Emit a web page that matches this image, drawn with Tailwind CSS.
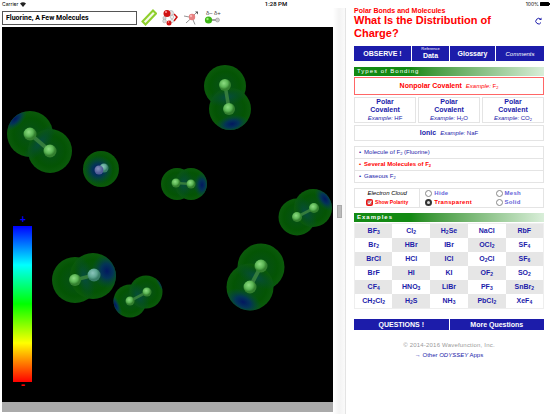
<!DOCTYPE html>
<html lang="en">
<head>
  <meta charset="UTF-8" />
  <meta name="viewport" content="width=device-width, initial-scale=1.0" />
  <title>Polar Bonds and Molecules</title>
  <script src="https://cdn.jsdelivr.net/npm/@tailwindcss/browser@4"></script>
</head>
<body class="h-screen flex flex-col overflow-hidden bg-white font-['Liberation_Sans',Arial,sans-serif] text-[#1c1caa]">
  <!-- Status bar -->
  <header class="grid grid-cols-3 items-center h-2 shrink-0 px-[2px] font-[Inter,sans-serif] text-[5px] leading-none text-black">
    <div class="flex items-center gap-[2px]">
      Carrier
      <svg class="w-[6px] h-[5px]" viewBox="0 0 12 10"><path d="M6 10 0 3a9 9 0 0 1 12 0z" fill="#222" /></svg>
    </div>
    <div class="text-center font-[Roboto,sans-serif] text-[6px] font-medium">1:28 PM</div>
    <div class="flex items-center justify-end gap-px">
      100%
      <svg class="w-[10px] h-[4px]" viewBox="0 0 20 8"><rect width="18" height="8" rx="1" /><rect x="18" y="2" width="2" height="4" /></svg>
    </div>
  </header>

  <div class="flex flex-1 min-h-0">
    <!-- Viewer -->
    <main class="flex flex-col flex-1 min-w-0 pl-[2px] pb-[2px]">
      <div class="flex items-center h-[19px] shrink-0">
        <input type="text" aria-label="Model title" value="Fluorine, A Few Molecules" class="w-[135px] h-[14px] border border-[#555] px-[3px] font-[Roboto,sans-serif] text-[7px] font-bold text-black" />
        <div class="flex items-center gap-[5px] ml-[4px]">
          <button aria-label="Measure">
            <svg class="w-4 h-[17px]" viewBox="0 0 16 17"><path d="M1.500 12.500 12 1.500 15 4.500 4.500 15.500z" fill="#f4fbe4" stroke="#8fcf2c" stroke-width="2" /></svg>
          </button>
          <button aria-label="Molecules">
            <svg class="w-4 h-[17px]" viewBox="0 0 16 17">
              <path d="M12 5l3 3-3 4" fill="none" stroke="#c11" stroke-width="1.500" />
              <g stroke="#888" stroke-width=".4"><circle cx="9" cy="4" r="2.500" fill="#e4e4e4" /><circle cx="10" cy="8" r="1.800" fill="#eee" /><circle cx="2.500" cy="9" r="1.600" fill="#ddd" /><circle cx="2.500" cy="12" r="1.800" fill="#ddd" /><circle cx="10" cy="12" r="1.600" fill="#eee" /></g>
              <circle cx="5" cy="4.500" r="3.500" fill="#d01414" /><circle cx="4" cy="3" r="1" fill="#f99" />
              <circle cx="7" cy="14" r="2.500" fill="#d01414" /><circle cx="6.500" cy="13" r=".7" fill="#f99" />
            </svg>
          </button>
          <button aria-label="Bonds">
            <svg class="w-4 h-[17px]" viewBox="0 0 16 17"><path d="M9 8 14 3M1 7l8 1.500M3 14l6-5.500 3 7" fill="none" stroke="#888" stroke-width=".9" /><path d="M12 2.500h3v3z" fill="#555" /><circle cx="9" cy="8" r="3.200" fill="#e78080" /><circle cx="8" cy="7" r="1.200" fill="#f7b5b5" /></svg>
          </button>
          <button aria-label="Partial charges">
            <svg class="w-[18px] h-[17px]" viewBox="0 0 18 17">
              <text x="2" y="6" font-size="6" fill="#444">δ−</text><text x="10" y="6" font-size="6" fill="#444">δ+</text>
              <path d="M5 11h8" stroke="#666" stroke-width="1.200" /><circle cx="4.500" cy="11" r="3.600" fill="#3db515" /><circle cx="3.500" cy="10" r="1.200" fill="#9e7" /><circle cx="13.500" cy="11" r="2" fill="#ccc" stroke="#888" stroke-width=".5" />
            </svg>
          </button>
        </div>
      </div>

      <svg class="flex-1 min-h-0 w-full bg-black" viewBox="2 27 331 375" preserveAspectRatio="xMidYMid slice">
        <defs>
          <radialGradient id="cloud"><stop offset="0" stop-color="#06501a" /><stop offset=".7" stop-color="#045404" /><stop offset="1" stop-color="#0b5a0b" /></radialGradient>
          <radialGradient id="charge"><stop offset="0" stop-color="#021760" /><stop offset=".4" stop-color="#033060" stop-opacity=".9" /><stop offset="1" stop-color="#055040" stop-opacity="0" /></radialGradient>
          <radialGradient id="seam"><stop offset="0" stop-color="#064c40" /><stop offset="1" stop-color="#064c30" stop-opacity="0" /></radialGradient>
          <radialGradient id="atom" cx=".4" cy=".35"><stop offset="0" stop-color="#8ddd82" /><stop offset=".65" stop-color="#5cb555" /><stop offset="1" stop-color="#33802f" /></radialGradient>
          <radialGradient id="atomPositive" cx=".4" cy=".35"><stop offset="0" stop-color="#8ac4bc" /><stop offset=".65" stop-color="#5ea692" /><stop offset="1" stop-color="#387e68" /></radialGradient>
          <radialGradient id="atomEnd" cx=".4" cy=".35"><stop offset="0" stop-color="#8793bd" /><stop offset="1" stop-color="#505c97" /></radialGradient>
          <linearGradient id="scale" x2="0" y2="1">
            <stop offset="0" stop-color="#00f" /><stop offset=".25" stop-color="#0ff" /><stop offset=".5" stop-color="#0f0" /><stop offset=".75" stop-color="#ff0" /><stop offset="1" stop-color="#f00" />
          </linearGradient>
        </defs>
        <g id="molecules"></g>
        <rect x="13" y="226" width="19" height="156" fill="url(#scale)" />
        <text x="23" y="223" text-anchor="middle" font-size="10" font-weight="bold" fill="#00f">+</text>
        <text x="23" y="389" text-anchor="middle" font-size="13" font-weight="bold" fill="#f00">-</text>
      </svg>
      <div class="h-[10px] shrink-0 bg-[#aaa]"></div>
    </main>

    <!-- Divider -->
    <div class="flex items-center justify-center w-[13px] shrink-0 border-r border-[#e4e4e4] bg-linear-to-r from-white via-[#f3f3f3] to-[#fafafa]">
      <div class="w-[5px] h-[13px] border border-[#aaa] bg-[#bbb]"></div>
    </div>

    <!-- Lesson -->
    <aside class="w-[206px] shrink-0 px-2">
      <h2 class="text-[7px] leading-[6px] font-bold text-[#f00]">Polar Bonds and Molecules</h2>
      <div class="flex justify-between mb-[6px]">
        <h1 class="w-[150px] text-[11px] leading-[13px] font-bold text-[#f00]">What Is the Distribution of Charge?</h1>
        <button aria-label="Reload" class="self-start pt-[3px] pr-[2px]">
          <svg class="w-[7px] h-[8px]" viewBox="0 0 14 16" fill="none" stroke="#1c1caa" stroke-width="2"><path d="M11.500 5A5.500 5.500 0 1 0 12 11" /><path d="M13 1v5H8z" fill="#1c1caa" stroke="none" /></svg>
        </button>
      </div>

      <nav class="grid grid-cols-[57fr_37fr_45fr_48fr] gap-px h-[15px] text-center text-[7px] leading-[8px] font-bold text-white">
        <a href="#" class="flex items-center justify-center bg-[#1c1caa]">OBSERVE !</a>
        <a href="#" class="bg-[#1c1caa]"><span class="block text-[4px] leading-[6px] font-normal">Reference</span>Data</a>
        <a href="#" class="flex items-center justify-center bg-[#1c1caa]">Glossary</a>
        <a href="#" class="flex items-center justify-center bg-[#1c1caa] text-[6px] font-normal italic">Comments</a>
      </nav>

      <h3 class="mt-[6px] h-[9px] pl-[3px] bg-linear-to-r from-[#138a13] from-30% to-[#d9eed9] text-[6px] leading-[9px] tracking-[1px] text-white">Types of Bonding</h3>
      <div class="mt-px grid grid-cols-3 gap-[2px] text-center text-[7px] leading-[8px]">
        <a href="#" class="col-span-3 border border-[#f66] leading-[16px] text-[#f00]"><b>Nonpolar Covalent</b> <i class="ml-[2px] text-[6px]">Example: </i><span class="text-[6px]">F<sub class="text-[4px]">2</sub></span></a>
        <a href="#" class="border border-[#e4e4e4]"><b class="block">Polar<br>Covalent</b><span class="block text-[6px]"><i>Example:</i> HF</span></a>
        <a href="#" class="border border-[#e4e4e4]"><b class="block">Polar<br>Covalent</b><span class="block text-[6px]"><i>Example:</i> H<sub class="text-[4px]">2</sub>O</span></a>
        <a href="#" class="border border-[#e4e4e4]"><b class="block">Polar<br>Covalent</b><span class="block text-[6px]"><i>Example:</i> CO<sub class="text-[4px]">2</sub></span></a>
        <a href="#" class="col-span-3 border border-[#e4e4e4] leading-[14px]"><b>Ionic</b> <span class="ml-[2px] text-[6px]"><i>Example:</i> NaF</span></a>
      </div>

      <ul class="mt-[5px] border border-[#e4e4e4] divide-y divide-[#e4e4e4] text-[6px] leading-[11px]">
        <li class="flex gap-[3px] pl-1">•<a href="#">Molecule of F<sub class="text-[4px]">2</sub> (Fluorine)</a></li>
        <li class="flex gap-[3px] pl-1 font-bold text-[#f00]">•<a href="#">Several Molecules of F<sub class="text-[4px]">2</sub></a></li>
        <li class="flex gap-[3px] pl-1">•<a href="#">Gaseous F<sub class="text-[4px]">2</sub></a></li>
      </ul>

      <form class="mt-[5px] grid grid-cols-[66fr_124fr] border border-[#e4e4e4] text-[6px] leading-[9px] font-bold">
        <div class="text-center border-r border-[#e4e4e4]">
          <div class="font-normal italic text-black">Electron Cloud</div>
          <label class="flex items-center justify-center gap-[2px] text-[5px] leading-[9px] text-[#f00]">
            <span class="relative flex">
              <input type="checkbox" checked class="appearance-none w-[7px] h-[7px] rounded-[2px] bg-[#e11]" />
              <svg class="absolute inset-0 w-[7px] h-[7px] pointer-events-none" viewBox="0 0 14 14"><rect x="3" y="3" width="8" height="8" rx="1" fill="#b99" /><path d="M4 7.500 6.500 10 11 3.500" fill="none" stroke="#fff" stroke-width="2" /></svg>
            </span>
            Show Polarity
          </label>
        </div>
        <div class="grid grid-cols-[71fr_48fr] pl-[5px] tracking-[0.3px] text-[#6464d8]">
          <label class="flex items-center gap-[2px]"><input type="radio" name="cloud" class="appearance-none w-[7px] h-[7px] rounded-full border border-[#888]" />Hide</label>
          <label class="flex items-center gap-[2px]"><input type="radio" name="cloud" class="appearance-none w-[7px] h-[7px] rounded-full border border-[#888]" />Mesh</label>
          <label class="flex items-center gap-[2px] text-[#f00]"><input type="radio" name="cloud" checked class="appearance-none w-[7px] h-[7px] rounded-full border-2 border-[#333] bg-[#ddd]" />Transparent</label>
          <label class="flex items-center gap-[2px]"><input type="radio" name="cloud" class="appearance-none w-[7px] h-[7px] rounded-full border border-[#888]" />Solid</label>
        </div>
      </form>

      <h3 class="mt-[5px] h-[9px] pl-[3px] bg-linear-to-r from-[#138a13] from-30% to-[#d9eed9] text-[6px] leading-[9px] tracking-[1px] font-bold text-white">Examples</h3>
      <table class="mt-px w-full table-fixed border border-[#eee] text-center text-[7px] leading-[14px] font-bold">
        <tbody id="examples"></tbody>
      </table>

      <div class="mt-[10px] grid grid-cols-2 gap-px text-center text-[7px] leading-[11px] font-bold text-white">
        <a href="#" class="bg-[#1c1caa]">QUESTIONS !</a>
        <a href="#" class="bg-[#1c1caa]">More Questions</a>
      </div>

      <footer class="mt-[10px] text-center text-[6px] leading-[10px]">
        <p class="tracking-[0.2px] text-[#999]">© 2014-2016 Wavefunction, Inc.</p>
        <a href="#" class="block">→ Other <i>ODYSSEY</i> Apps</a>
      </footer>
    </aside>
  </div>

  <script>
    // lobes and atoms: [x, y, r], charge: [x, y, rx, ry, angle]
    const molecules = [
      { lobes: [[30, 134, 23], [50, 151, 22]], atoms: [[30, 134, 6.5], [50, 151, 6.5]], charge: [[15, 119, 15, 8, -45]] },
      { lobes: [[101, 169, 18]], atoms: [[104, 168, 4.5, "atomPositive"], [99, 170, 4.5, "atomEnd"]], charge: [[98, 170, 15, 15, 0]] },
      { lobes: [[225, 86, 21], [230, 109, 21]], atoms: [[225, 85, 6], [229, 109, 6]], charge: [[232, 124, 17, 9, -10]] },
      { lobes: [[177, 184, 16], [191, 184, 16]], atoms: [[176, 183, 4.5], [191, 184, 4.5]], charge: [[202, 185, 8, 13, 0]] },
      { lobes: [[75, 280, 23], [93, 276, 23]], atoms: [[75, 280, 6], [94, 275, 6.5, "atomPositive"]], charge: [[107, 271, 15, 18, -10]] },
      { lobes: [[130, 301, 16.5], [146, 292, 16.5]], atoms: [[130, 301, 4.5], [147, 292, 4.5]], charge: [[115, 305, 5, 13, -25], [162, 284, 4, 14, -30]] },
      { lobes: [[297, 217, 18.5], [313, 208, 19]], atoms: [[297, 217, 5], [314, 208, 5]], charge: [[325, 199, 8, 14, -35]] },
      { lobes: [[261, 267, 23.5], [250, 287, 23.5]], atoms: [[261, 266, 6.5], [250, 287, 6.5]], charge: [[243, 302, 20, 12, 25]] }
    ];

    document.getElementById("molecules").innerHTML = molecules.map((m, i) => {
      const [a, b] = m.atoms;
      const x = (a[0] + b[0]) / 2, y = (a[1] + b[1]) / 2;
      const angle = Math.atan2(b[1] - a[1], b[0] - a[0]) * 180 / Math.PI;
      const shape = m.lobes.map(l => `<circle cx="${l[0]}" cy="${l[1]}" r="${l[2]}" />`).join("");
      const seam = m.lobes.length > 1 ? `<ellipse cx="${x}" cy="${y}" rx="9" ry="${m.lobes[0][2]}" fill="url(#seam)" transform="rotate(${angle} ${x} ${y})" />` : "";
      const charge = m.charge.map(c => `<ellipse cx="${c[0]}" cy="${c[1]}" rx="${c[2]}" ry="${c[3]}" fill="url(#charge)" transform="rotate(${c[4]} ${c[0]} ${c[1]})" />`).join("");
      const atoms = m.atoms.map(t => `<circle cx="${t[0]}" cy="${t[1]}" r="${t[2]}" fill="url(#${t[3] || "atom"})" />`).join("");
      return `<clipPath id="m${i}">${shape}</clipPath><g fill="url(#cloud)">${shape}</g><g clip-path="url(#m${i})">${seam}${charge}</g>
        <path d="M${a[0]} ${a[1]} ${b[0]} ${b[1]}" stroke="#347c3c" stroke-width="${a[2] * 0.6}" />${atoms}`;
    }).join("");

    const examples = [
      ["BF3", "Cl2", "H2Se", "NaCl", "RbF"],
      ["Br2", "HBr", "IBr", "OCl2", "SF4"],
      ["BrCl", "HCl", "ICl", "O2Cl", "SF6"],
      ["BrF", "HI", "KI", "OF2", "SO2"],
      ["CF4", "HNO3", "LiBr", "PF3", "SnBr2"],
      ["CH2Cl2", "H2S", "NH3", "PbCl2", "XeF4"]
    ];
    document.getElementById("examples").innerHTML = examples.map((row, r) =>
      `<tr>${row.map((f, c) => `<td class="h-[14px] p-0 ${(r + c) % 2 ? "" : "bg-[#e6e6e6]"}"><a href="#">${f.replace(/\d/g, '<sub class="text-[5px]">$&</sub>')}</a></td>`).join("")}</tr>`
    ).join("");
  </script>
</body>
</html>
